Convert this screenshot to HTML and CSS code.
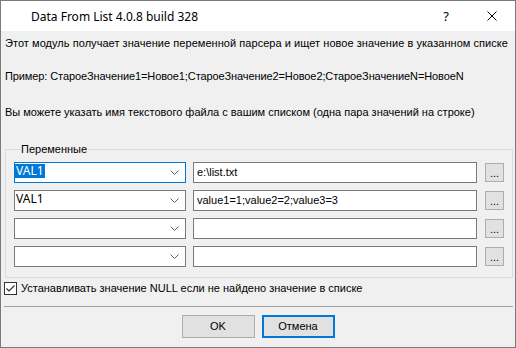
FILE: index.html
```html
<!DOCTYPE html>
<html>
<head>
<meta charset="utf-8">
<link rel="stylesheet" href="styles.css">
</head>
<body>
<div class="window">
  <div class="titlebar">
    <span class="title">Data From List 4.0.8 build 328</span>
    <span class="tbtn help">?</span>
    <span class="tbtn close"><svg width="10" height="10" viewBox="0 0 10 10"><path d="M0.5 0.5 L9.5 9.5 M9.5 0.5 L0.5 9.5" stroke="#000" stroke-width="1" fill="none"/></svg></span>
  </div>
  <div class="content">
    <div class="line l1">Этот модуль получает значение переменной парсера и ищет новое значение в указанном списке</div>
    <div class="line l2">Пример: СтароеЗначение1=Новое1;СтароеЗначение2=Новое2;СтароеЗначениеN=НовоеN</div>
    <div class="line l3">Вы можете указать имя текстового файла с вашим списком (одна пара значений на строке)</div>
    <fieldset class="group">
      <legend class="legend">Переменные</legend>
      <div class="rows">
        <div class="row">
          <div class="combo focus"><span class="ctext sel">VAL1</span><svg class="chev" width="9" height="5" viewBox="0 0 9 5"><path d="M0.5 0.5 L4.5 4.5 L8.5 0.5" stroke="#606060" fill="none"/></svg></div>
          <div class="field">e:\list.txt</div>
          <div class="dots">...</div>
        </div>
        <div class="row">
          <div class="combo"><span class="ctext">VAL1</span><svg class="chev" width="9" height="5" viewBox="0 0 9 5"><path d="M0.5 0.5 L4.5 4.5 L8.5 0.5" stroke="#606060" fill="none"/></svg></div>
          <div class="field">value1=1;value2=2;value3=3</div>
          <div class="dots">...</div>
        </div>
        <div class="row">
          <div class="combo"><span class="ctext"></span><svg class="chev" width="9" height="5" viewBox="0 0 9 5"><path d="M0.5 0.5 L4.5 4.5 L8.5 0.5" stroke="#606060" fill="none"/></svg></div>
          <div class="field"></div>
          <div class="dots">...</div>
        </div>
        <div class="row">
          <div class="combo"><span class="ctext"></span><svg class="chev" width="9" height="5" viewBox="0 0 9 5"><path d="M0.5 0.5 L4.5 4.5 L8.5 0.5" stroke="#606060" fill="none"/></svg></div>
          <div class="field"></div>
          <div class="dots">...</div>
        </div>
      </div>
    </fieldset>
    <div class="check">
      <span class="box"><svg width="11" height="11" viewBox="0 0 11 11"><path d="M1.5 5.5 L4 8 L9.5 2.5" stroke="#333" stroke-width="1.2" fill="none"/></svg></span>
      <span class="clabel">Устанавливать значение NULL если не найдено значение в списке</span>
    </div>
    <div class="sep"></div>
    <div class="buttons">
      <div class="btn">OK</div>
      <div class="btn default">Отмена</div>
    </div>
  </div>
</div>
</body>
</html>
```
FILE: styles.css
```css
* { box-sizing: border-box; }
html, body { margin: 0; padding: 0; width: 516px; height: 348px; overflow: hidden; }
body {
  background: #f0f0f0;
  font-family: "Liberation Sans", Arial, sans-serif;
  font-size: 11px;
  color: #000;
}
.window {
  width: 516px;
  height: 348px;
  border: 1px solid #7a7a7a;
  background: #f0f0f0;
  display: flex;
  flex-direction: column;
}
.titlebar {
  height: 30px;
  flex: none;
  background: #fff;
  display: flex;
  align-items: center;
}
.title {
  flex: 1;
  margin-left: 30px;
  font-family: "Noto Sans", sans-serif;
  font-size: 12px;
}
.tbtn {
  width: 46px;
  height: 30px;
  display: flex;
  align-items: center;
  justify-content: center;
  font-family: "Noto Sans", sans-serif;
  font-size: 13px;
}
.content { flex: 1; display: flex; flex-direction: column; }
.line {
  height: 13px;
  line-height: 13px;
  margin-left: 4px;
  white-space: nowrap;
}
.l1 { margin-top: 6px; letter-spacing: 0.05px; }
.l2 { margin-top: 20px; letter-spacing: -0.1px; }
.l3 { margin-top: 23px; }
.group {
  margin: 24px 2px 0 4px;
  padding: 6px 0 10px 8px;
  border: 1px solid #dcdcdc;
  min-width: 0;
}
.legend {
  margin-left: 6px;
  padding: 0 1px;
  line-height: 13px;
  height: 13px;
}
.rows { display: flex; flex-direction: column; gap: 7px; }
.row { display: flex; height: 21px; align-items: flex-start; }
.combo {
  width: 172px;
  height: 21px;
  border: 1px solid #7a7a7a;
  background: #fff;
  display: flex;
  align-items: flex-start;
}
.combo.focus { border-color: #0078d7; }
.ctext {
  font-family: "Noto Sans", sans-serif;
  font-size: 12px;
  line-height: 14px;
  height: 14px;
  margin-top: 1px;
  padding: 0 1px;
}
.sel { background: #0078d7; color: #fff; }
.chev { margin-left: auto; margin-right: 6px; margin-top: 7px; }
.field {
  margin-left: 7px;
  width: 284px;
  height: 21px;
  border: 1px solid #7a7a7a;
  background: #fff;
  padding-left: 3px;
  line-height: 19px;
  white-space: nowrap;
}
.dots {
  margin-left: 8px;
  margin-top: 1px;
  width: 19px;
  height: 19px;
  border: 1px solid #adadad;
  background: #e1e1e1;
  text-align: center;
  line-height: 19px;
  font-size: 11px;
}
.check {
  display: flex;
  align-items: center;
  height: 13px;
  margin: 4px 0 0 3px;
}
.box {
  width: 13px;
  height: 13px;
  border: 1px solid #333;
  background: #fff;
  display: flex;
  align-items: center;
  justify-content: center;
}
.clabel { margin-left: 4px; line-height: 13px; white-space: nowrap; }
.sep {
  height: 1px;
  background: #a0a0a0;
  margin: 11px 2px 0 3px;
}
.buttons {
  display: flex;
  justify-content: center;
  gap: 7px;
  margin-top: 8px;
}
.btn {
  width: 73px;
  height: 23px;
  border: 1px solid #adadad;
  background: #e1e1e1;
  text-align: center;
  line-height: 21px;
}
.btn.default { border: 2px solid #0078d7; line-height: 19px; }
```
